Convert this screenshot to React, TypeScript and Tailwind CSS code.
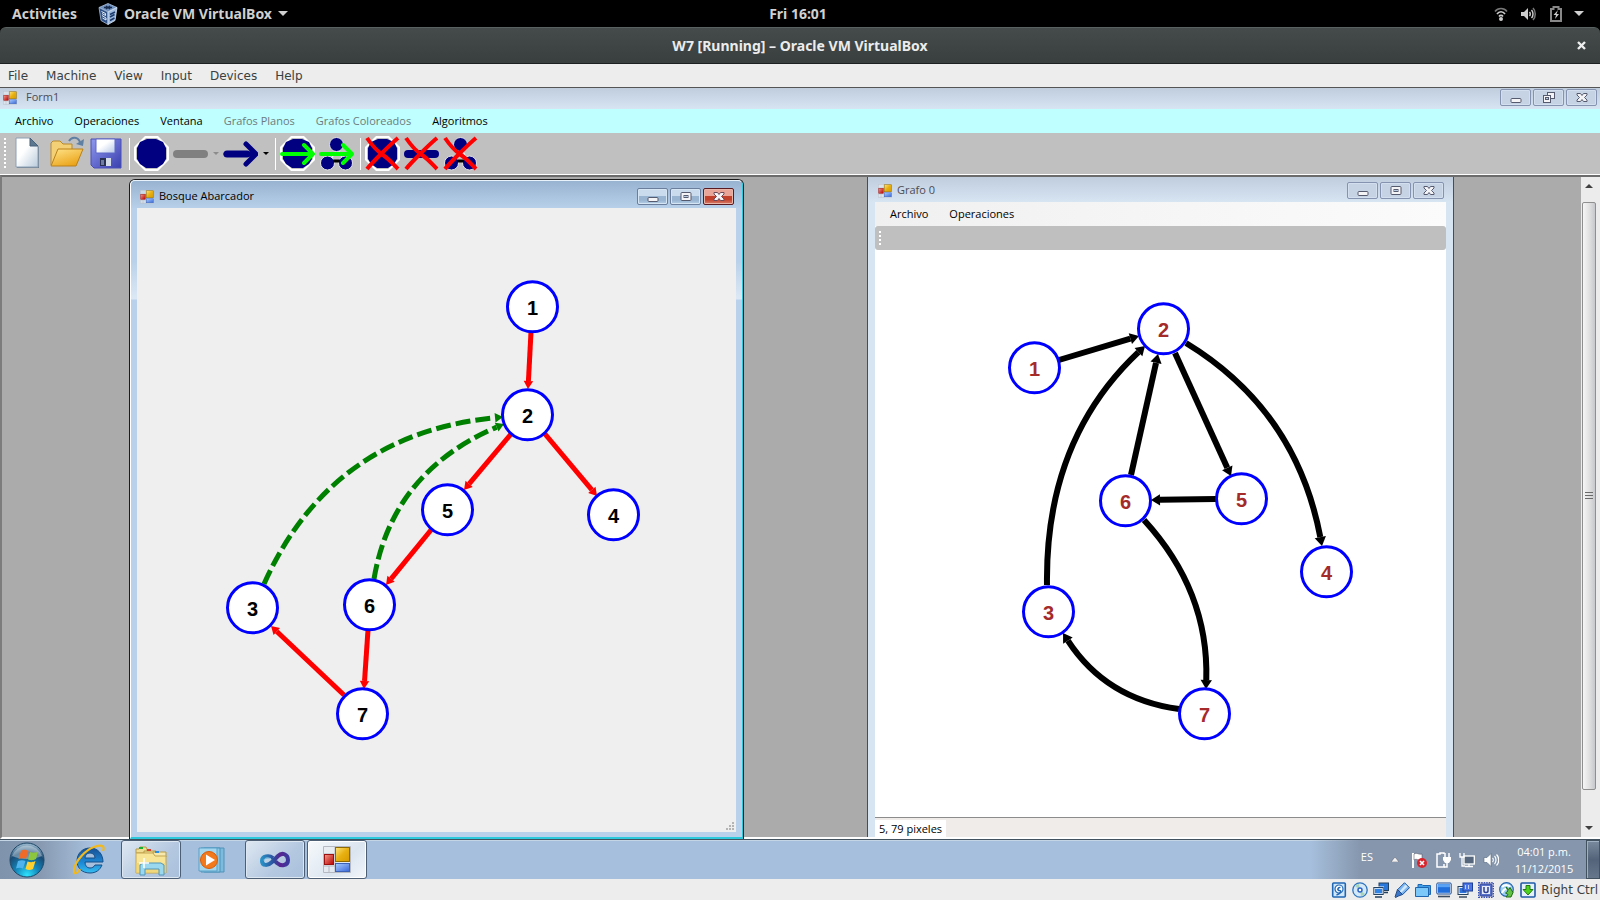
import React from 'react';

type Point = [number, number];
type Node = { id: number; x: number; y: number };
type Edge = { from: Point; to: Point; via?: Point; color: string; dashed?: boolean };

const UI = "font-['Open_Sans','Noto_Sans',sans-serif]";

/* ---------- graphs ---------- */

const forestNodes: Node[] = [
  { id: 1, x: 532, y: 306 },
  { id: 2, x: 527, y: 414 },
  { id: 5, x: 447, y: 509 },
  { id: 4, x: 613, y: 514 },
  { id: 3, x: 252, y: 607 },
  { id: 6, x: 369, y: 604 },
  { id: 7, x: 362, y: 713 },
];

const forestEdges: Edge[] = [
  { from: [531, 332], to: [528, 389], color: '#ff0000' },
  { from: [511, 434], to: [464, 490], color: '#ff0000' },
  { from: [545, 434], to: [597, 496], color: '#ff0000' },
  { from: [431, 530], to: [386, 585], color: '#ff0000' },
  { from: [368, 630], to: [364, 689], color: '#ff0000' },
  { from: [344, 695], to: [271, 626], color: '#ff0000' },
  { from: [264, 584], via: [331, 434], to: [503, 417], color: '#008000', dashed: true },
  { from: [374, 579], via: [392, 472], to: [504, 424], color: '#008000', dashed: true },
];

const graphNodes: Node[] = [
  { id: 1, x: 1034, y: 367 },
  { id: 2, x: 1163, y: 328 },
  { id: 6, x: 1125, y: 500 },
  { id: 5, x: 1241, y: 498 },
  { id: 4, x: 1326, y: 571 },
  { id: 3, x: 1048, y: 611 },
  { id: 7, x: 1204, y: 713 },
];

const graphEdges: Edge[] = [
  { from: [1059, 360], to: [1139, 336], color: '#000' },
  { from: [1131, 475], to: [1158, 354], color: '#000' },
  { from: [1175, 353], to: [1231, 476], color: '#000' },
  { from: [1216, 499], to: [1151, 500], color: '#000' },
  { from: [1186, 343], via: [1296, 410], to: [1322, 546], color: '#000' },
  { from: [1047, 585], via: [1045, 440], to: [1145, 346], color: '#000' },
  { from: [1144, 520], via: [1209, 591], to: [1206, 689], color: '#000' },
  { from: [1179, 709], via: [1106, 699], to: [1063, 633], color: '#000' },
];

function Arrow({ edge, width }: { edge: Edge; width: number }) {
  const { from, to, via, color, dashed } = edge;
  const [ox, oy] = via ?? from;
  const len = Math.hypot(to[0] - ox, to[1] - oy);
  const dx = (to[0] - ox) / len;
  const dy = (to[1] - oy) / len;
  const head = width + 3;
  const half = width * 0.95;
  const bx = to[0] - dx * head;
  const by = to[1] - dy * head;
  const d = via ? `M${from} Q${via} ${bx},${by}` : `M${from} L${bx},${by}`;
  return (
    <g>
      <path d={d} fill="none" stroke={color} strokeWidth={width} strokeDasharray={dashed ? '15 5' : undefined} />
      <polygon
        fill={color}
        points={`${to[0]},${to[1]} ${bx - dy * half},${by + dx * half} ${bx + dy * half},${by - dx * half}`}
      />
    </g>
  );
}

function Graph(props: {
  label: string;
  nodes: Node[];
  edges: Edge[];
  viewBox: string;
  stroke: number;
  ink: string;
  className: string;
}) {
  return (
    <svg role="img" aria-label={props.label} viewBox={props.viewBox} className={props.className}>
      {props.edges.map((e, i) => (
        <Arrow key={i} edge={e} width={props.stroke} />
      ))}
      {props.nodes.map((n) => (
        <g key={n.id}>
          <circle cx={n.x + 0.5} cy={n.y + 0.8} r="25" fill="#fff" stroke="#0000ff" strokeWidth="3" />
          <text
            x={n.x + 0.5}
            y={n.y + 9}
            textAnchor="middle"
            fill={props.ink}
            className="font-['Liberation_Sans',Arial,sans-serif] text-[20px] font-bold"
          >
            {n.id}
          </text>
        </g>
      ))}
    </svg>
  );
}

/* ---------- icons ---------- */

function FormIcon({ className }: { className: string }) {
  return (
    <svg viewBox="0 0 28 28" className={className} aria-hidden="true">
      <defs>
        <linearGradient id="fy" x1="0" y1="0" x2="1" y2="1">
          <stop offset="0" stopColor="#ffe680" />
          <stop offset=".5" stopColor="#e8b010" />
          <stop offset="1" stopColor="#d79a00" />
        </linearGradient>
        <linearGradient id="fr" x1="0" y1="0" x2="1" y2="1">
          <stop offset="0" stopColor="#f49a8a" />
          <stop offset="1" stopColor="#b80000" />
        </linearGradient>
        <linearGradient id="fb" x1="0" y1="0" x2="1" y2="1">
          <stop offset="0" stopColor="#a8ccff" />
          <stop offset="1" stopColor="#3a68d8" />
        </linearGradient>
      </defs>
      <path d="M.5.5h27v26H.5zM12 0v27M0 8h12M6 20v7M0 20h12" fill="#e8ebf0" fillOpacity=".6" stroke="#b4b9c2" />
      <rect x="12.5" y="1.5" width="14" height="14" fill="url(#fy)" stroke="#8f6a00" />
      <rect x="1.5" y="8.5" width="9" height="10" fill="url(#fr)" stroke="#9c1010" />
      <rect x="12.5" y="17.5" width="14" height="8" fill="url(#fb)" stroke="#3c62b8" />
    </svg>
  );
}

function VBoxCube() {
  return (
    <svg viewBox="0 0 20 22" className="h-[22px] w-5" aria-hidden="true">
      <path d="M10 .5 19 4.500 10 9 1 4.500z" fill="#6f92c0" stroke="#a9bfdc" strokeWidth=".8" />
      <path d="M1 4.500 10 9v12.500L3 17.500z" fill="#2f5288" stroke="#a9bfdc" strokeWidth=".8" />
      <path d="M19 4.500 10 9v12.500l7-4z" fill="#9cbae0" stroke="#dbe6f4" strokeWidth=".8" />
      <path d="M6 4.500h8M8 3l4 3M12 3 8 6" stroke="#182c50" strokeWidth="1.300" />
      <path d="m3.500 8.500 4 2v2l-3.500-2M4 12.500l4 2.500v2l-3.500-2" fill="none" stroke="#e6eefa" />
      <path d="m12 11.500 5-2.500M12 14l4.500-2.500M12 17.500l4.500-2.500" stroke="#1d3a6c" strokeWidth="1.500" />
    </svg>
  );
}

const NewDoc = (
  <svg viewBox="0 0 35 35" className="size-[35px]">
    <defs>
      <linearGradient id="nd" x1="0" y1="0" x2="1" y2="1">
        <stop offset=".4" stopColor="#fff" />
        <stop offset="1" stopColor="#b9cbdc" />
      </linearGradient>
    </defs>
    <path d="M7 3h14l8 8v21H7z" fill="#54687c" opacity=".75" />
    <path d="M6 2h14l8 8v21H6z" fill="url(#nd)" stroke="#8ba0b4" />
    <path d="M20 2v8h8z" fill="#5c7790" stroke="#48617a" />
  </svg>
);

const OpenFolder = (
  <svg viewBox="0 0 35 35" className="size-[35px]">
    <defs>
      <linearGradient id="of" x1="0" y1="0" x2="0.600" y2="1">
        <stop offset="0" stopColor="#ffe58c" />
        <stop offset="1" stopColor="#eba41a" />
      </linearGradient>
    </defs>
    <path d="M2 29V7l2-2h7l3 3h9v5L8 29z" fill="#f3cf76" stroke="#b8892c" />
    <path d="M9 13h25l-7 17H2z" fill="url(#of)" stroke="#b9801a" />
    <path d="M20 5c3-5 9-4 11 1" fill="none" stroke="#5f7fa3" strokeWidth="2" />
    <path d="m35 3-1 7-7-2z" fill="#5f7fa3" />
  </svg>
);

const Save = (
  <svg viewBox="0 0 35 35" className="size-[35px]">
    <defs>
      <linearGradient id="sv" x1="0" y1="0" x2="1" y2="1">
        <stop offset="0" stopColor="#8f98ee" />
        <stop offset="1" stopColor="#3a3fae" />
      </linearGradient>
      <linearGradient id="sl" x1="0" y1="0" x2="1" y2="1">
        <stop offset=".4" stopColor="#fff" />
        <stop offset="1" stopColor="#b4c6e6" />
      </linearGradient>
    </defs>
    <path d="M3 3h30v29H6l-3-3z" fill="url(#sv)" stroke="#4a50b8" />
    <path d="M8 3h19v14H8z" fill="url(#sl)" stroke="#5f69c8" />
    <path d="M12 22h11v8H12z" fill="#2a3050" />
    <path d="M18 22h5v8h-5z" fill="#d5dcea" />
    <path d="M13 24h3v5h-3z" fill="#707ca8" />
  </svg>
);

const Cross = (
  <path d="M2 2C6 8 12 15 18 19s10 9 15 14M33 2C27 7 22 12 16 18S6 28 2 33" stroke="#ff0000" strokeWidth="4" fill="none" />
);
const GreenArrow = (
  <path
    d="M2 18h31M24 9l9 9-9 9"
    fill="none"
    stroke="#00ff00"
    strokeWidth="4"
    strokeLinecap="round"
    strokeLinejoin="round"
  />
);
const Disc = (
  <>
    <path d="M11 0h13l11 11v13L24 35H11L0 24V11z" fill="#fff" />
    <path d="M12 2h11l10 10v11L23 33H12L2 23V12z" fill="#c0c0c0" />
    <path d="M13 3h9l7 3 3 6v11l-3 5-6 4H12l-6-4-3-5V12l3-6z" fill="#000080" />
  </>
);
const ThreeDots = (
  <>
    <path d="M11 26 18 12l8 14" fill="none" stroke="#fff" />
    <g fill="#000080" stroke="#e4e4e4">
      <circle cx="17.500" cy="8.500" r="7" />
      <circle cx="8.500" cy="27" r="7" />
      <circle cx="26.500" cy="27" r="7" />
    </g>
    <path d="M14 25h7" stroke="#000" strokeWidth="3" />
  </>
);

function Glyph({ children }: { children: React.ReactNode }) {
  return (
    <svg viewBox="0 0 35 35" className="size-[35px]">
      {children}
    </svg>
  );
}

function Tool({ label, children, disabled }: { label: string; children: React.ReactNode; disabled?: boolean }) {
  return (
    <button aria-label={label} disabled={disabled} className="size-[35px] shrink-0">
      {children}
    </button>
  );
}

function Caret({ fill, label }: { fill: string; label: string }) {
  return (
    <button aria-label={label} className="flex w-[7px] justify-center">
      <svg viewBox="0 0 6 3" className="h-[3px] w-1.5">
        <path d="M0 0h6L3 3z" fill={fill} />
      </svg>
    </button>
  );
}

const Separator = () => <span className="h-8 w-[3px] border-r border-white" />;

const Grip = ({ className }: { className: string }) => (
  <span className={`w-0.5 bg-[repeating-linear-gradient(#fff_0_2px,transparent_2px_4px)] ${className}`} />
);

/* ---------- window chrome ---------- */

function CaptionButton({ kind, tone }: { kind: 'min' | 'max' | 'restore' | 'close'; tone: 'idle' | 'active' | 'red' }) {
  const tones = {
    idle: 'border-[#8593b0] bg-[#c5d3e5] shadow-[inset_0_0_0_1px_#d3dfee]',
    active:
      'border-[#6b7f9c] bg-[linear-gradient(#c9dbec_0_45%,#98b4d1_50%_75%,#b6d0e8)] shadow-[inset_0_0_0_1px_#d6e5f3]',
    red: 'border-[#5a1a22] bg-[linear-gradient(#e9a598_0_45%,#c1402c_50%_70%,#d8806c)] shadow-[inset_0_0_0_1px_#eab5a9]',
  };
  const labels = { min: 'Minimizar', max: 'Maximizar', restore: 'Restaurar', close: 'Cerrar' };
  const ink = tone === 'red' ? '#6c4a58' : '#565a6e';
  return (
    <button
      aria-label={labels[kind]}
      className={`flex h-[17px] w-[31px] items-center justify-center rounded-[2px] border ${tones[tone]}`}
    >
      <svg viewBox="0 0 12 11" className="h-[11px] w-3" fill="#f4f4f6" stroke={ink}>
        {kind === 'min' && <rect x="1" y="6.500" width="10" height="4" rx="1" />}
        {kind === 'max' && (
          <>
            <rect x="1" y="1.500" width="10" height="8" rx="1" />
            <rect x="4" y="4.500" width="4" height="2" fill="#b8cbe0" />
          </>
        )}
        {kind === 'restore' && (
          <>
            <rect x="4.500" y=".5" width="7" height="6" />
            <rect x=".5" y="3.500" width="7" height="7" />
            <rect x="2.500" y="5.500" width="3" height="2" fill="#b8cbe0" />
          </>
        )}
        {kind === 'close' && (
          <path d="M1 1.500h3.500L6 3.500l1.500-2H11v1.500L8.500 5.500 11 8v1.500H7.500L6 7.500l-1.500 2H1V8l2.500-2.500L1 3z" />
        )}
      </svg>
    </button>
  );
}

/* ---------- taskbar icons ---------- */

const StartOrb = (
  <svg viewBox="0 0 36 36" className="size-9">
    <defs>
      <radialGradient id="orb" cx=".5" cy=".95" r=".9">
        <stop offset="0" stopColor="#2fe4ff" />
        <stop offset=".4" stopColor="#1384b8" />
        <stop offset=".75" stopColor="#1b4b74" />
        <stop offset="1" stopColor="#8fb0c6" />
      </radialGradient>
    </defs>
    <circle cx="18" cy="18" r="17" fill="url(#orb)" stroke="#1e4868" />
    <path d="M3 14a16 16 0 0 1 30 0c-9 4-21 4-30 0z" fill="#fff" opacity=".35" />
    <path d="M12 9c3-2 5-1 7.500 0L17 17c-2-1-5-1-7.500 0z" fill="#ee6a28" />
    <path d="M21 10c3 1 5 1 8-.5L27 17c-3 1.500-5 1.500-8 .5z" fill="#8cc63e" />
    <path d="M9 19c3-1 5-1 7.500 0L14 26.500c-2-1-5-1-7 0z" fill="#4fb4ee" />
    <path d="M18.500 19.500c3 1 5 1 8-.5l-2.500 8c-3 1.500-5 1-7.500 0z" fill="#ffd02e" />
  </svg>
);

const Explorer = (
  <svg viewBox="0 0 34 32" className="h-8 w-[34px]">
    <path d="M2 5h3l1-2h6l1 2v4H2z" fill="#f1dc93" stroke="#b89b45" />
    <path d="M5 3h4v2H5z" fill="#18b030" />
    <path d="M10 7h12v5H10z" fill="#f1dc93" stroke="#b89b45" />
    <path d="M13 5h4v2h-4z" fill="#d8402c" />
    <path d="M19 8h13v5H19z" fill="#f7e9ae" stroke="#b89b45" />
    <path d="M21 7h4v2h-4z" fill="#2c8ee0" />
    <path d="M2 9h17l2 3h11v17H2z" fill="#f8e596" stroke="#c2a550" />
    <path d="M2 19h30v10H2z" fill="#efcf6c" opacity=".6" />
    <path d="M6 31V21l3-2h18l3 2v10h-5v-6H11v6z" fill="#9ad8f0" stroke="#5396b8" />
    <path d="M10 14v10M5 19h10" stroke="#fff" strokeWidth="1.500" />
  </svg>
);

const InternetExplorer = (
  <svg viewBox="0 0 34 32" className="h-8 w-[34px]">
    <defs>
      <linearGradient id="ie" x1="0" y1="0" x2="0" y2="1">
        <stop offset="0" stopColor="#174f94" />
        <stop offset=".6" stopColor="#1e8ad6" />
        <stop offset="1" stopColor="#35c0f2" />
      </linearGradient>
    </defs>
    <path
      d="M31 18H13c0 4 2 6 5 6 2 0 4-1 5-3h7c-2 5-6 8-12 8C10 29 5 24 5 17S10 4 18 4s13 6 13 14zM13 14h10c0-3-2-5-5-5s-5 2-5 5z"
      fill="url(#ie)"
      stroke="#174f88"
    />
    <path d="M8 25c-4 6-7 6-5.500-1C4 17 13 6 22 3c8-3 11-1 9 4" fill="none" stroke="#f2b91e" strokeWidth="2.200" />
  </svg>
);

const MediaPlayer = (
  <svg viewBox="0 0 30 28" className="h-7 w-[30px]">
    <path d="M6 2h20v24H6z" fill="#7cbbdc" stroke="#4e93ba" />
    <path d="M3 2h19v24H3z" fill="#8cc8e6" stroke="#4e93ba" />
    <path d="M1 2h18v23H1z" fill="#a4d6ee" stroke="#5aa0c6" />
    <circle cx="11" cy="14" r="8.500" fill="#f37a1c" stroke="#d85c08" />
    <path d="m8 8.500 9 5.500-9 5.500z" fill="#fff" />
  </svg>
);

const VisualStudio = (
  <svg viewBox="0 0 32 18" className="h-[18px] w-8">
    <defs>
      <linearGradient id="vs" x1="0" y1="0" x2="1" y2="0">
        <stop offset="0" stopColor="#2a8fc4" />
        <stop offset=".45" stopColor="#2c4d9c" />
        <stop offset=".7" stopColor="#5a2390" />
        <stop offset="1" stopColor="#3a3a9e" />
      </linearGradient>
    </defs>
    <path
      d="M14 7C10 4 3 5 3 10s6 5 10 1l6-6c4-4 10-2 10 4s-7 6.500-11 3l-3-3"
      fill="none"
      stroke="url(#vs)"
      strokeWidth="4"
    />
    <path d="M12 8c-3-2-7-1-7 1.500" fill="none" stroke="#8fd4ee" />
  </svg>
);

function TaskButton({ label, look, children }: { label: string; look: 'plain' | 'open' | 'front'; children: React.ReactNode }) {
  const looks = {
    plain: 'border-transparent',
    open: 'border-[#4d5f74] bg-[linear-gradient(135deg,#dfe8f2,#b4c8e0_60%,#a9c0dc)] shadow-[inset_0_0_0_1px_#dce7f2]',
    front: 'border-[#4d5f74] bg-[linear-gradient(135deg,#f6f9fc,#dbe5f0_60%,#f2f6fa)] shadow-[inset_0_0_0_1px_#fff]',
  };
  return (
    <button aria-label={label} className={`flex h-[39px] w-[60px] items-center justify-center rounded-[3px] border ${looks[look]}`}>
      {children}
    </button>
  );
}

/* ---------- status icons of the virtual machine ---------- */

const statusIcons: { name: string; art: React.ReactNode }[] = [
  {
    name: 'Hard disk',
    art: (
      <>
        <rect x="1.700" y="1" width="12.600" height="14" rx="1" fill="#cfe6fb" stroke="#1f66b4" strokeWidth="1.600" />
        <circle cx="8" cy="7" r="4" fill="#fff" stroke="#1f66b4" strokeWidth="1.200" />
        <path d="M9.500 5.500c-3-.5-3.500 3-1 3s1 3.500-3 4.500" fill="none" stroke="#1f66b4" strokeWidth="1.600" />
      </>
    ),
  },
  {
    name: 'Optical disc',
    art: (
      <>
        <circle cx="8" cy="8" r="7.200" fill="#d3e8f8" stroke="#2f74bd" strokeWidth="1.300" />
        <path d="M8 8 3 4a6 6 0 0 1 4-2zM8 8l5 4a6 6 0 0 1-4 2z" fill="#a7d4b8" />
        <circle cx="8" cy="8" r="2" fill="#fff" stroke="#2c62c8" strokeWidth="1.500" />
      </>
    ),
  },
  {
    name: 'Network',
    art: (
      <>
        <rect x="6" y="1" width="9.500" height="7.500" fill="#2a78dc" stroke="#24405f" />
        <path d="M9 10.500h6" stroke="#24405f" strokeWidth="1.500" />
        <rect x="0" y="4.500" width="11" height="9" fill="#fff" />
        <rect x=".8" y="5.500" width="9.400" height="7" fill="#e8f1fb" stroke="#24405f" />
        <rect x="2" y="6.800" width="7" height="4.500" fill="#2f84e6" />
        <path d="M2 15h7" stroke="#24405f" strokeWidth="1.500" />
      </>
    ),
  },
  {
    name: 'USB',
    art: (
      <>
        <path d="m10.500.7 5 5-7 7-5-5z" fill="#7db8f2" stroke="#1f56a0" />
        <path d="m11.500 2.500 2 2-6 6-2-1z" fill="#d2e8fb" />
        <path d="m3.500 7.500 5 5-4 1.500-3 1.500-.5-.5 1-3z" fill="#3b78cc" stroke="#274a80" />
      </>
    ),
  },
  {
    name: 'Shared folders',
    art: (
      <>
        <path d="M3 12V2.500h4l1 1h7.500v9z" fill="#3f9ee8" stroke="#1e66b0" />
        <path d="M.5 14.500V5.500h13v9z" fill="#7cc8f8" stroke="#1e66b0" />
      </>
    ),
  },
  {
    name: 'Display',
    art: (
      <>
        <rect x=".8" y="1" width="14.400" height="11" rx="1" fill="#e4effb" stroke="#1c4d94" />
        <rect x="2" y="2.200" width="12" height="8.600" fill="#1f6edc" />
        <path d="M2 2.200h12v3H2z" fill="#5aa2f4" />
        <path d="M2 14.500h12" stroke="#3c4c60" strokeWidth="1.600" />
      </>
    ),
  },
  {
    name: 'Display windows',
    art: (
      <>
        <rect x="1" y="4.500" width="10" height="8" fill="#e4effb" stroke="#24405f" />
        <rect x="2.500" y="6" width="7" height="5" fill="#2f74dc" />
        <rect x="6" y="1" width="9.500" height="8" fill="#4a74e8" stroke="#1f3f94" />
        <path d="M8 5h5" stroke="#c0d4fb" strokeWidth="4" strokeDasharray="1 2" />
        <path d="M2 15h8" stroke="#3c4c60" strokeWidth="1.500" />
      </>
    ),
  },
  {
    name: 'Virtualization',
    art: (
      <>
        <rect x=".7" y=".7" width="14.600" height="14.600" fill="none" stroke="#3f55b4" strokeWidth="1.400" strokeDasharray="1.500 1" />
        <rect x="2" y="2" width="12" height="12" rx="1" fill="#5a74cc" stroke="#2e3f94" />
        <rect x="4" y="4" width="8" height="8" fill="#e6ecfb" />
        <path d="M6 5v4c0 2 4 2 4 0V5" fill="none" stroke="#2e3f94" strokeWidth="1.500" />
      </>
    ),
  },
  {
    name: 'Mouse integration',
    art: (
      <>
        <circle cx="7.500" cy="7.500" r="6.800" fill="#9fd0f4" stroke="#2563b0" strokeWidth="1.200" />
        <path d="M3 5c3-3 7-2 8 0M3 11c2-5 5-5 7-3" fill="none" stroke="#fff" strokeWidth="2" />
        <path d="m7 5 3 2.500 1-2 3 5-2 4.500H7l2-2.500L6.500 11 9 9z" fill="#62c244" stroke="#1e6c14" />
      </>
    ),
  },
  {
    name: 'Keyboard capture',
    art: (
      <>
        <rect x="1" y="1" width="14" height="14" rx="1" fill="#e4f0fb" stroke="#1f5aa8" strokeWidth="1.600" />
        <path d="M6 3.500h4v4h3L8 13 3 7.500h3z" fill="#4cd21c" stroke="#237812" />
      </>
    ),
  },
];

/* ---------- page ---------- */

const vmMenu = ['File', 'Machine', 'View', 'Input', 'Devices', 'Help'];
const appMenu = [
  { text: 'Archivo' },
  { text: 'Operaciones' },
  { text: 'Ventana' },
  { text: 'Grafos Planos', off: true },
  { text: 'Grafos Coloreados', off: true },
  { text: 'Algoritmos' },
];

function GnomeBar() {
  return (
    <header className="grid h-[27px] shrink-0 grid-cols-[1fr_auto_1fr] items-center bg-black pl-3 pr-4 font-['Noto_Sans',sans-serif] text-[14px] font-bold text-[#d0d0d0]">
      <div className="flex items-center">
        <button>Activities</button>
        <button className="ml-[21px] flex items-center gap-1.5">
          <VBoxCube />
          Oracle VM VirtualBox
          <svg viewBox="0 0 10 5" className="h-[5px] w-2.5">
            <path d="M0 0h10L5 5z" fill="#d0d0d0" />
          </svg>
        </button>
      </div>
      <span>Fri 16:01</span>
      <div className="flex items-center justify-end gap-3">
        <svg viewBox="0 0 14 14" className="size-3.5" fill="none" stroke="#ccc" strokeWidth="1.600">
          <path d="M1 4.500c3-4 9-4 12 0" stroke="#777" />
          <path d="M3 7c2-3 6-3 8 0M5 9.500c1-1.500 3-1.500 4 0" />
          <circle cx="7" cy="12" r="1.200" fill="#ccc" />
        </svg>
        <svg viewBox="0 0 16 14" className="h-3.5 w-4" fill="none" stroke="#ccc" strokeWidth="1.500">
          <path d="M1 5h3l4-4v12L4 9H1z" fill="#ccc" stroke="none" />
          <path d="M9.500 5c1 1 1 3 0 4M11.500 3c2 2 2 6 0 8" />
          <path d="M13 1c3 3 3 9 0 12" stroke="#777" />
        </svg>
        <svg viewBox="0 0 12 16" className="ml-0.5 h-4 w-3" fill="none" stroke="#888" strokeWidth="2">
          <path d="M1 3h2.500V1h5v2H11v12H1z" />
          <path d="M8 4 3.500 9H6l-1 4 4-5H6.500z" fill="#ccc" stroke="none" />
        </svg>
        <svg viewBox="0 0 10 5" className="h-[5px] w-2.5">
          <path d="M0 0h10L5 5z" fill="#d0d0d0" />
        </svg>
      </div>
    </header>
  );
}

function ForestWindow() {
  return (
    <section
      aria-label="Bosque Abarcador"
      className="absolute -bottom-0.5 left-[127px] top-0.5 z-10 flex w-[615px] flex-col rounded-t-[6px] border border-b-0 border-[#1c1c1c] bg-[#b9d1ea]"
    >
      <div className="flex min-h-0 flex-1 flex-col rounded-t-[5px] border border-b-2 border-b-[#2cc8dc] border-l-white border-r-[#2cc8dc] border-t-[#e8f2fa] bg-[linear-gradient(#98b3d1,#b9d1ea_28px,#b9d1ea_80px,#dce8f5_118px,#b9d1ea_119px)] px-1.5 pb-[5px]">
        <div className="flex h-[27px] shrink-0 items-center pl-[3px] pr-0.5 pt-1">
          <FormIcon className="size-[14px]" />
          <h2 className="ml-[5px] flex-1 text-[11px] text-black">Bosque Abarcador</h2>
          <div className="flex gap-0.5">
            <CaptionButton kind="min" tone="active" />
            <CaptionButton kind="max" tone="active" />
            <CaptionButton kind="close" tone="red" />
          </div>
        </div>
        <div className="relative min-h-0 flex-1 overflow-hidden bg-[#efefef]">
          <Graph
            label="Bosque abarcador"
            nodes={forestNodes}
            edges={forestEdges}
            viewBox="137 208 599 624"
            stroke={5}
            ink="#000"
            className="h-[624px] w-[599px]"
          />
          <svg viewBox="0 0 8 8" className="absolute bottom-0.5 right-0.5 size-2" fill="#b4b4b4">
            <path d="M6 0h2v2H6zM3 3h2v2H3zM6 3h2v2H6zM0 6h2v2H0zM3 6h2v2H3zM6 6h2v2H6z" />
          </svg>
        </div>
      </div>
    </section>
  );
}

function GraphWindow() {
  return (
    <section
      aria-label="Grafo 0"
      className="absolute bottom-0 left-[865px] top-0 flex w-[587px] flex-col border-x border-[#4c4c4c] bg-[linear-gradient(#bfcddd,#d7e4f2_25px)] px-[7px]"
    >
      <div className="flex h-[25px] shrink-0 items-center pl-[3px] pr-0.5 pt-0.5">
        <FormIcon className="size-[14px]" />
        <h2 className="ml-[5px] flex-1 text-[11px] text-[#4c4c54]">Grafo 0</h2>
        <div className="flex gap-0.5">
          <CaptionButton kind="min" tone="idle" />
          <CaptionButton kind="max" tone="idle" />
          <CaptionButton kind="close" tone="idle" />
        </div>
      </div>
      <nav className="flex h-6 shrink-0 items-center gap-[21px] bg-[linear-gradient(90deg,#f0f0f0,#fbfbfb)] px-[15px] text-[11px] text-black">
        <button>Archivo</button>
        <button>Operaciones</button>
      </nav>
      <div className="flex flex-1 flex-col overflow-hidden bg-white">
        <div className="flex h-6 shrink-0 items-center rounded-[3px] bg-[#bfbfbf] pl-1">
          <Grip className="h-3.5" />
        </div>
        <div className="min-h-0 flex-1 overflow-hidden">
          <Graph
            label="Grafo 0"
            nodes={graphNodes}
            edges={graphEdges}
            viewBox="875 250 571 567"
            stroke={6}
            ink="#a52a2a"
            className="h-[567px] w-[571px]"
          />
        </div>
        <div className="flex h-5 shrink-0 border-t border-[#8c8c8c] bg-[#f0ecea] pt-0.5 text-[11px] leading-[18px] text-black">
          <span className="bg-white px-1">5, 79 pixeles</span>
        </div>
      </div>
    </section>
  );
}

function ScrollBar() {
  return (
    <div className="mr-[3px] flex w-4 shrink-0 flex-col items-center bg-[#ececec]">
      <button aria-label="Subir" className="flex h-[25px] items-center pb-2">
        <svg viewBox="0 0 8 4" className="h-1 w-2">
          <path d="M0 4h8L4 0z" fill="#404040" />
        </svg>
      </button>
      <div className="flex w-3.5 flex-1 items-center justify-center rounded-[2px] border border-[#8f8f8f] bg-[linear-gradient(90deg,#f6f6f6,#e2e2e2_50%,#c6c8cc)]">
        <span className="h-2 w-2 bg-[repeating-linear-gradient(#6a6a6a_0_1px,transparent_1px_3px)]" />
      </div>
      <button aria-label="Bajar" className="flex h-[47px] items-end pb-[7px]">
        <svg viewBox="0 0 8 4" className="h-1 w-2">
          <path d="M0 0h8L4 4z" fill="#404040" />
        </svg>
      </button>
    </div>
  );
}

function Taskbar() {
  return (
    <footer className="flex h-10 shrink-0 border-t border-[#43525f] bg-[linear-gradient(90deg,#7f93ad,#8799b1_40px,#a6bfdc_90px)] shadow-[inset_0_1px_0_#c4d5e6]">
      <div className="flex flex-1 gap-0.5">
        <button aria-label="Inicio" className="flex w-[57px] items-center pl-[9px]">
          {StartOrb}
        </button>
        <TaskButton label="Internet Explorer" look="plain">
          {InternetExplorer}
        </TaskButton>
        <TaskButton label="Explorador de Windows" look="open">
          {Explorer}
        </TaskButton>
        <TaskButton label="Reproductor de Windows Media" look="plain">
          {MediaPlayer}
        </TaskButton>
        <TaskButton label="Visual Studio" look="open">
          {VisualStudio}
        </TaskButton>
        <TaskButton label="Form1" look="front">
          <FormIcon className="size-7" />
        </TaskButton>
      </div>
      <div className="flex items-center bg-[linear-gradient(90deg,transparent,#8596ad_50px)] pl-[50px] text-white">
        <span className="pb-1 text-[11px]">ES</span>
        <svg viewBox="0 0 8 5" className="ml-[18px] h-[5px] w-2">
          <path d="M0 5h8L4 0z" fill="#f2f2f2" stroke="#445" strokeWidth=".4" />
        </svg>
        <div className="ml-3 flex gap-2">
          <svg viewBox="0 0 16 16" className="size-4">
            <path d="M2 1v15" stroke="#fff" strokeWidth="2" />
            <path d="M3 2c3-2 4 1 8 0v6c-4 1-5-2-8 0z" fill="#fff" stroke="#445" strokeWidth=".5" />
            <circle cx="11" cy="11" r="5" fill="#d8242c" />
            <path d="m9 9 4 4M13 9l-4 4" stroke="#fff" strokeWidth="1.600" />
          </svg>
          <svg viewBox="0 0 16 16" className="size-4" fill="none" stroke="#fff" strokeWidth="1.500">
            <path d="M9 2V1H5v1H2v13h7v-3" />
            <path d="M10 1v4M14 1v4" />
            <path d="M8 5h8v3l-2 3h-4L8 8z" fill="#fff" stroke="none" />
            <path d="M12 10v5H9" />
          </svg>
          <svg viewBox="0 0 16 16" className="size-4" fill="none" stroke="#fff" strokeWidth="1.300">
            <rect x="5" y="4" width="10.300" height="8" fill="#56677d" />
            <path d="M6 14.500h8M10 12v2" />
            <path d="M1 1v4h4V1M3 5v9h3" />
          </svg>
          <svg viewBox="0 0 16 16" className="size-4" fill="none" stroke="#fff" strokeWidth="1.200">
            <path d="M1 5.500h3l4-4v13l-4-4H1z" fill="#fff" stroke="#56677d" strokeWidth=".6" />
            <path d="M9.500 6c1 1 1 3 0 4M11.500 4c2 2 2 6 0 8M13.500 2.500c3 3 3 8 0 11" />
          </svg>
        </div>
        <div className="ml-3.5 mr-[11px] w-[62px] text-center text-[11px] leading-[17px]">
          <p>04:01 p.m.</p>
          <p>11/12/2015</p>
        </div>
        <button
          aria-label="Mostrar escritorio"
          className="h-full w-3.5 border border-[#43525f] bg-[linear-gradient(#7a8a9e,#53647a_50%,#66778c)] shadow-[inset_1px_1px_0_#9fb0c3]"
        />
      </div>
    </footer>
  );
}

export default function App() {
  return (
    <div className={`flex h-screen min-h-[600px] flex-col overflow-hidden bg-[#ededed] ${UI}`}>
      <GnomeBar />

      <div className="bg-black">
        <div className="relative flex h-[37px] items-center justify-center rounded-t-[6px] border-b border-t border-b-[#1c2020] border-t-[#5a6261] bg-[linear-gradient(#444b4a,#393f3f)] font-['Noto_Sans',sans-serif] text-[14px] font-bold text-[#ececec]">
          <h1>W7 [Running] – Oracle VM VirtualBox</h1>
          <button aria-label="Close" className="absolute right-3.5">
            <svg viewBox="0 0 9 9" className="size-[9px]">
              <path d="m1 1 7 7M8 1 1 8" stroke="#eee" strokeWidth="2.400" />
            </svg>
          </button>
        </div>
      </div>

      <nav className="flex h-6 shrink-0 items-center gap-[18px] border-b border-[#555] px-2 font-['DejaVu_Sans',sans-serif] text-[12px] text-[#3a3f40]">
        {vmMenu.map((m) => (
          <button key={m}>{m}</button>
        ))}
      </nav>

      <div className="flex h-[21px] shrink-0 items-center bg-[linear-gradient(#bfcddd,#d7e4f2)] pb-0.5 pl-[3px] pr-[3px]">
        <FormIcon className="size-[14px]" />
        <h2 className="ml-[9px] flex-1 text-[11px] text-[#4c4c54]">Form1</h2>
        <div className="flex gap-0.5">
          <CaptionButton kind="min" tone="idle" />
          <CaptionButton kind="restore" tone="idle" />
          <CaptionButton kind="close" tone="idle" />
        </div>
      </div>

      <nav className="flex h-6 shrink-0 items-center gap-[21px] bg-[#c0ffff] px-[15px] text-[11px] text-black">
        {appMenu.map((m) => (
          <button key={m.text} disabled={m.off} className="disabled:text-[#6d7b7b]">
            {m.text}
          </button>
        ))}
      </nav>

      <div className="flex h-[42px] shrink-0 items-center gap-1 border-b border-white bg-[#c0c0c0] pl-1">
        <Grip className="h-8" />
        <Tool label="Nuevo">{NewDoc}</Tool>
        <Tool label="Abrir">{OpenFolder}</Tool>
        <Tool label="Guardar">{Save}</Tool>
        <Separator />
        <Tool label="Nodo">
          <Glyph>{Disc}</Glyph>
        </Tool>
        <Tool label="Arista" disabled>
          <Glyph>
            <path d="M4 18h27" stroke="#808080" strokeWidth="8" strokeLinecap="round" />
          </Glyph>
        </Tool>
        <Caret label="Opciones de arista" fill="#8c8c8c" />
        <Tool label="Arista dirigida">
          <Glyph>
            <path
              d="M3 18h29M23 8l10 10-10 10"
              fill="none"
              stroke="#000080"
              strokeWidth="5"
              strokeLinecap="round"
              strokeLinejoin="round"
            />
            <path d="M4 18h20" stroke="#000080" strokeWidth="7" strokeLinecap="round" />
          </Glyph>
        </Tool>
        <Caret label="Opciones de arista dirigida" fill="#000" />
        <Separator />
        <Tool label="Mover nodo">
          <Glyph>
            {Disc}
            {GreenArrow}
          </Glyph>
        </Tool>
        <Tool label="Mover grafo">
          <Glyph>
            {ThreeDots}
            {GreenArrow}
          </Glyph>
        </Tool>
        <Separator />
        <Tool label="Eliminar nodo">
          <Glyph>
            {Disc}
            {Cross}
          </Glyph>
        </Tool>
        <Tool label="Eliminar arista">
          <Glyph>
            <path d="M4 18h27" stroke="#000080" strokeWidth="8" strokeLinecap="round" />
            {Cross}
          </Glyph>
        </Tool>
        <Tool label="Eliminar grafo">
          <Glyph>
            {ThreeDots}
            {Cross}
          </Glyph>
        </Tool>
      </div>

      <main className="flex min-h-0 flex-1 border-b-2 border-l-2 border-t-2 border-b-white border-l-[#7c7c7c] border-t-[#6c6c6c] bg-[#ececec]">
        <div className="relative min-w-0 flex-1 bg-[#ababab]">
          <ForestWindow />
          <GraphWindow />
        </div>
        <ScrollBar />
      </main>

      <Taskbar />

      <div className="flex h-[21px] shrink-0 items-center justify-end gap-[5px] pr-0.5 font-['DejaVu_Sans',sans-serif] text-[12px] text-[#3a3f40]">
        {statusIcons.map((s) => (
          <svg key={s.name} role="img" aria-label={s.name} viewBox="0 0 16 16" className="size-4">
            {s.art}
          </svg>
        ))}
        <span className="whitespace-nowrap">Right Ctrl</span>
      </div>
    </div>
  );
}
